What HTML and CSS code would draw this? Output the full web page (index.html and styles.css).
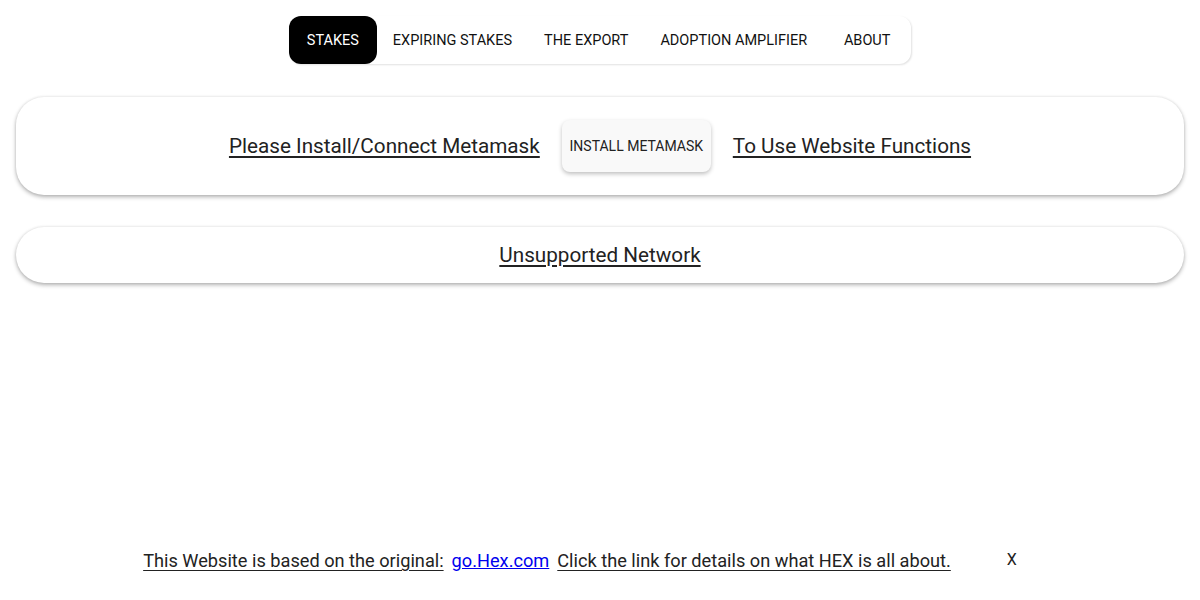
FILE: index.html
```html
<!DOCTYPE html>
<html lang="en">
<head>
  <meta charset="UTF-8">
  <meta name="viewport" content="width=device-width, initial-scale=1.0">
  <title>HEX Stakes</title>
  <link rel="stylesheet" href="styles.css">
</head>
<body>
  <!-- Навигация -->
  <div class="nav-wrap">
    <nav class="tabs">
      <button class="tab active">Stakes</button>
      <button class="tab">Expiring Stakes</button>
      <button class="tab">The Export</button>
      <button class="tab">Adoption Amplifier</button>
      <button class="tab">About</button>
    </nav>
  </div>

  <!-- Metamask -->
  <div class="card card-tall">
    <span class="note">Please Install/Connect Metamask</span>
    <button class="install">Install Metamask</button>
    <span class="note">To Use Website Functions</span>
  </div>

  <div class="card card-short">
    <span class="note">Unsupported Network</span>
  </div>

  <!-- Подвал -->
  <div class="footer">
    <span class="foot-text">This Website is based on the original:</span>
    <a class="foot-link" href="#">go.Hex.com</a>
    <span class="foot-text">Click the link for details on what HEX is all about.</span>
    <button class="close">X</button>
  </div>
</body>
</html>
```

FILE: styles.css
```css
body {
  font-family: Roboto, "Liberation Sans", sans-serif;
  margin: 0;
  padding: 16px 16px 0;
  background-color: #fff;
  color: #222;
  height: 600px;
  box-sizing: border-box;
  display: flex;
  flex-direction: column;
}
.nav-wrap {
  display: flex;
  justify-content: center;
}
.tabs {
  display: flex;
  height: 48px;
  border-radius: 12px;
  background: #fff;
  box-shadow: 1px 1px 2px rgba(0, 0, 0, 0.12);
}
.tab {
  font-family: inherit;
  font-size: 14.5px;
  text-transform: uppercase;
  background: transparent;
  color: #111;
  border: none;
  border-radius: 12px;
  padding: 0 16px;
  min-width: 88px;
  cursor: pointer;
}
.tab.active {
  background-color: #000;
  color: #fff;
}
.card {
  background: #fff;
  border-radius: 28px;
  box-shadow: 0 2px 4px rgba(0, 0, 0, 0.3), 0 0 3px rgba(0, 0, 0, 0.08);
  display: flex;
  justify-content: center;
  align-items: center;
  gap: 22px;
}
.card-tall {
  height: 98px;
  margin-top: 33px;
}
.card-short {
  height: 56px;
  margin-top: 32px;
}
.note {
  font-size: 20.7px;
  text-decoration: underline;
  text-underline-offset: 3px;
  color: #222;
}
.install {
  font-family: inherit;
  font-size: 14px;
  text-transform: uppercase;
  background-color: #f9f9f9;
  color: #222;
  border: none;
  border-radius: 8px;
  width: 149px;
  height: 52px;
  padding: 0;
  box-shadow: 0 2px 4px rgba(0, 0, 0, 0.25);
  cursor: pointer;
}
.footer {
  margin-top: auto;
  height: 50px;
  padding-right: 40px;
  display: flex;
  justify-content: center;
  align-items: flex-start;
  gap: 8px;
  font-size: 18.2px;
}
.foot-text {
  text-decoration: underline;
  text-underline-offset: 3px;
}
.foot-link {
  color: #0000ee;
}
.close {
  font-family: inherit;
  font-size: 16px;
  background: none;
  border: none;
  color: #222;
  margin-left: 48px;
  padding: 0;
  cursor: pointer;
}
```
